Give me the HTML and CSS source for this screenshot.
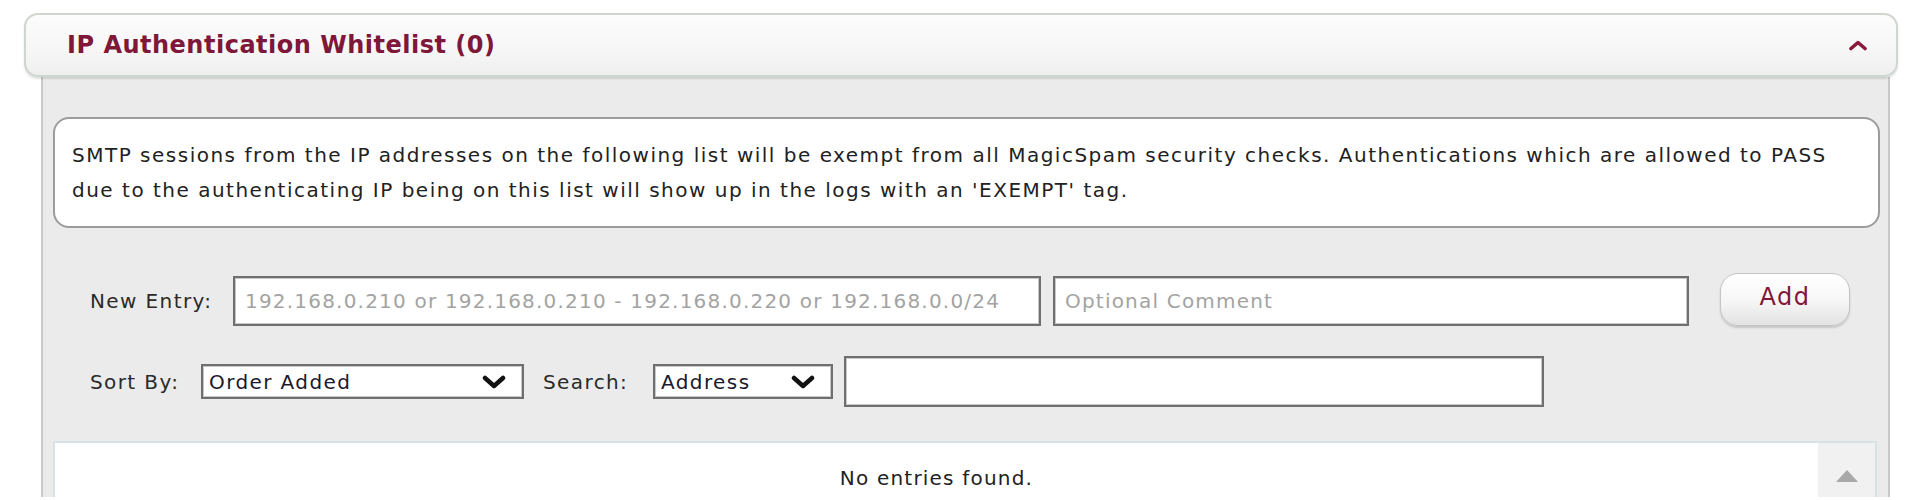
FILE: index.html
```html
<!DOCTYPE html>
<html>
<head>
<meta charset="utf-8">
<link rel="stylesheet" href="styles.css">
</head>
<body>
<div class="panel">
  <div class="panel-header">
    <h2 class="panel-title">IP Authentication Whitelist (0)</h2>
    <svg class="chev-up" width="20" height="12" viewBox="0 0 20 12"><path d="M3 9.5 L10 3.5 L17 9.5" fill="none" stroke="#8a1a3c" stroke-width="3.6" stroke-linejoin="round" stroke-linecap="round"/></svg>
  </div>
  <div class="panel-body">
    <div class="info">SMTP sessions from the IP addresses on the following list will be exempt from all MagicSpam security checks. Authentications which are allowed to PASS<br>due to the authenticating IP being on this list will show up in the logs with an 'EXEMPT' tag.</div>
    <div class="row entry-row">
      <span class="label">New Entry:</span>
      <input class="field ip-field" type="text" placeholder="192.168.0.210 or 192.168.0.210 - 192.168.0.220 or 192.168.0.0/24">
      <input class="field comment-field" type="text" placeholder="Optional Comment">
      <button class="add-btn">Add</button>
    </div>
    <div class="row sort-row">
      <span class="label">Sort By:</span>
      <div class="select sort-select"><span>Order Added</span><svg width="24" height="14" viewBox="0 0 24 14"><path d="M3 3 L12 11 L21 3" fill="none" stroke="#111" stroke-width="4.5" stroke-linejoin="round" stroke-linecap="round"/></svg></div>
      <span class="label search-label">Search:</span>
      <div class="select search-select"><span>Address</span><svg width="24" height="14" viewBox="0 0 24 14"><path d="M3 3 L12 11 L21 3" fill="none" stroke="#111" stroke-width="4.5" stroke-linejoin="round" stroke-linecap="round"/></svg></div>
      <input class="field search-field" type="text">
    </div>
    <div class="list">
      <div class="list-content">No entries found.</div>
      <div class="scrollbar"><svg width="24" height="14" viewBox="0 0 24 14"><path d="M1 13 L12 1 L23 13 Z" fill="#a8a8a8"/></svg></div>
    </div>
  </div>
</div>
</body>
</html>
```

FILE: styles.css
```css
html, body {
  margin: 0;
  padding: 0;
  background: #ffffff;
  font-family: "DejaVu Sans", Verdana, sans-serif;
  color: #333333;
  overflow: hidden;
}

.panel {
  margin: 13px 22px 0 24px;
}

.panel-header {
  position: relative;
  z-index: 1;
  height: 64px;
  box-sizing: border-box;
  border: 2px solid #cfd5cf;
  border-radius: 14px;
  background: linear-gradient(to bottom, #fcfcfc 0%, #f6f6f6 60%, #efefef 100%);
  box-shadow: 0 2px 2px rgba(0, 0, 0, 0.12);
  display: flex;
  align-items: center;
  justify-content: space-between;
  padding: 0 28px 0 41px;
}

.panel-title {
  margin: 0;
  font-size: 24px;
  font-weight: bold;
  color: #7e1738;
  letter-spacing: 0.5px;
}

.chev-up {
  display: block;
}

.panel-body {
  margin: 0 8px 0 17px;
  background: #ebebeb;
  border-left: 2px solid #c9c9c9;
  border-right: 2px solid #c9c9c9;
  padding: 40px 8px 0 10px;
  height: 420px;
  box-sizing: border-box;
}

.info {
  background: #ffffff;
  border: 2px solid #9c9c9c;
  border-radius: 16px;
  padding: 19px 17px 18px 17px;
  font-size: 20px;
  letter-spacing: 1.5px;
  line-height: 35px;
  color: #222222;
  white-space: nowrap;
}

.row {
  display: flex;
  align-items: center;
  padding-left: 37px;
}

.label {
  font-size: 20px;
  letter-spacing: 1.4px;
  color: #2a2a2a;
}

.entry-row {
  margin-top: 48px;
  height: 50px;
}

.entry-row .label {
  width: 143px;
}

.field {
  box-sizing: border-box;
  height: 50px;
  border: 2px solid #6f6f6f;
  box-shadow: inset 0 0 0 1px #c8c8c8;
  background: #ffffff;
  font-family: "DejaVu Sans", Verdana, sans-serif;
  font-size: 20px;
  letter-spacing: 1.2px;
  padding: 0 10px;
  margin: 0;
  outline: none;
}

.field::placeholder {
  color: #a3a3a3;
  opacity: 1;
}

.ip-field {
  width: 808px;
}

.comment-field {
  width: 636px;
  margin-left: 12px;
}

.add-btn {
  margin-left: 31px;
  width: 130px;
  height: 53px;
  box-sizing: border-box;
  border: 1px solid #c4c4c4;
  border-radius: 18px;
  background: linear-gradient(to bottom, #ffffff 0%, #f7f7f7 50%, #e3e3e3 100%);
  box-shadow: 0 2px 2px rgba(0, 0, 0, 0.15);
  font-family: "DejaVu Sans", Verdana, sans-serif;
  font-size: 24px;
  letter-spacing: 1.5px;
  color: #7e1738;
  padding: 0 0 6px 0;
  align-self: flex-start;
  margin-top: -3px;
}

.sort-row {
  margin-top: 30px;
  height: 51px;
}

.sort-row .label {
  width: 111px;
}

.select {
  box-sizing: border-box;
  height: 35px;
  border: 2px solid #6f6f6f;
  box-shadow: inset 0 0 0 1px #c8c8c8;
  background: #ffffff;
  display: flex;
  align-items: center;
  justify-content: space-between;
  padding: 0 16px 0 6px;
  font-size: 20px;
  letter-spacing: 1.4px;
  color: #1a1a2e;
  white-space: nowrap;
}

.select svg {
  display: block;
  flex: none;
}

.sort-select {
  width: 323px;
}

.search-label {
  margin-left: 19px;
  width: 110px !important;
}

.search-select {
  width: 180px;
}

.search-field {
  width: 700px;
  height: 51px;
  margin-left: 11px;
}

.list {
  margin-top: 34px;
  margin-right: 3px;
  border: 2px solid #d6e2e5;
  background: #ffffff;
  display: flex;
  height: 200px;
}

.list-content {
  flex: 1;
  text-align: center;
  font-size: 20px;
  letter-spacing: 1.2px;
  color: #222222;
  padding-top: 23px;
}

.scrollbar {
  width: 57px;
  background: #f1f1f1;
  display: flex;
  justify-content: center;
  padding-top: 26px;
  box-sizing: border-box;
}

.scrollbar svg {
  display: block;
}
```
